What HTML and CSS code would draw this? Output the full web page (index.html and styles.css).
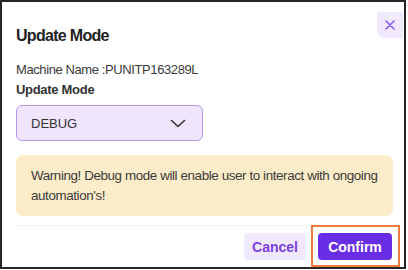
FILE: index.html
```html
<!DOCTYPE html>
<html>
<head>
    <link rel="stylesheet" href="styles.css">
</head>
<body>
    <div class="frame">
        <div class="header">
            <h3 class="title">Update Mode</h3>
            <button class="close" title="Close">
                <svg width="10" height="10" viewBox="0 0 10 10"><path d="M1 1L9 9M9 1L1 9" stroke="#8b5cf6" stroke-width="1.6" stroke-linecap="round"/></svg>
            </button>
        </div>
        <div class="machine">Machine Name :PUNITP163289L</div>
        <label class="label">Update Mode</label>
        <div class="select">
            <span>DEBUG</span>
            <svg width="16" height="9" viewBox="0 0 16 9"><path d="M1.5 1.5L8 7.5L14.5 1.5" fill="none" stroke="#333" stroke-width="1.6" stroke-linecap="round" stroke-linejoin="round"/></svg>
        </div>
        <div class="warning">Warning! Debug mode will enable user to interact with ongoing automation's!</div>
        <div class="divider"></div>
        <div class="footer">
            <button class="btn cancel">Cancel</button>
            <span class="highlight">
                <button class="btn confirm">Confirm</button>
            </span>
        </div>
    </div>
</body>
</html>
```

FILE: styles.css
```css
body {
    margin: 0;
    background: #fff;
    font-family: "Liberation Sans", Arial, sans-serif;
    color: #333;
}
.frame {
    box-sizing: border-box;
    width: 406px;
    height: 269px;
    border: 2px solid #262626;
    padding: 10px 11px 0 14px;
}
.header {
    display: flex;
    justify-content: space-between;
    align-items: flex-start;
}
.title {
    margin: 14px 0 0;
    font-size: 16px;
    line-height: 20px;
    letter-spacing: -0.7px;
    font-weight: bold;
    color: #222;
}
.close {
    width: 26px;
    height: 26px;
    margin-right: -10px;
    border: none;
    padding: 0;
    background: #f1e9fd;
    border-radius: 0 0 0 8px;
    display: flex;
    align-items: center;
    justify-content: center;
    cursor: pointer;
}
.machine {
    margin-top: 15px;
    font-size: 13px;
    letter-spacing: -0.4px;
    line-height: 18px;
    color: #3a3a3a;
}
.label {
    display: block;
    margin-top: 2px;
    font-size: 13px;
    letter-spacing: -0.3px;
    line-height: 18px;
    font-weight: bold;
    color: #333;
}
.select {
    box-sizing: border-box;
    width: 187px;
    height: 36px;
    margin-top: 6px;
    padding: 0 16px 0 14px;
    border: 1.5px solid #b794f6;
    border-radius: 6px;
    background: #efe5fd;
    display: flex;
    align-items: center;
    justify-content: space-between;
    font-size: 13px;
    color: #333;
}
.warning {
    margin-top: 14px;
    padding: 11px 12px 10px 15px;
    background: #fcecc9;
    border-radius: 7px;
    font-size: 13.4px;
    letter-spacing: -0.4px;
    line-height: 20px;
    color: #3a3a3a;
}
.divider {
    margin-top: 9px;
    height: 1px;
    background: #f3f3f3;
}
.footer {
    display: flex;
    justify-content: flex-end;
    align-items: flex-start;
    gap: 12px;
    padding: 7px 1px 0 0;
}
.btn {
    height: 27px;
    border: none;
    border-radius: 4px;
    font-family: "Liberation Sans", Arial, sans-serif;
    font-size: 14px;
    font-weight: bold;
    cursor: pointer;
}
.cancel {
    width: 62px;
    background: #f0e8fd;
    color: #7b3fe4;
}
.highlight {
    display: flex;
    border: 2px solid #f07a3a;
    padding: 6px 6px 5px 5px;
    margin: -8px -8px -7px -7px;
}
.confirm {
    width: 74px;
    background: #6a2de6;
    color: #fff;
}
```
